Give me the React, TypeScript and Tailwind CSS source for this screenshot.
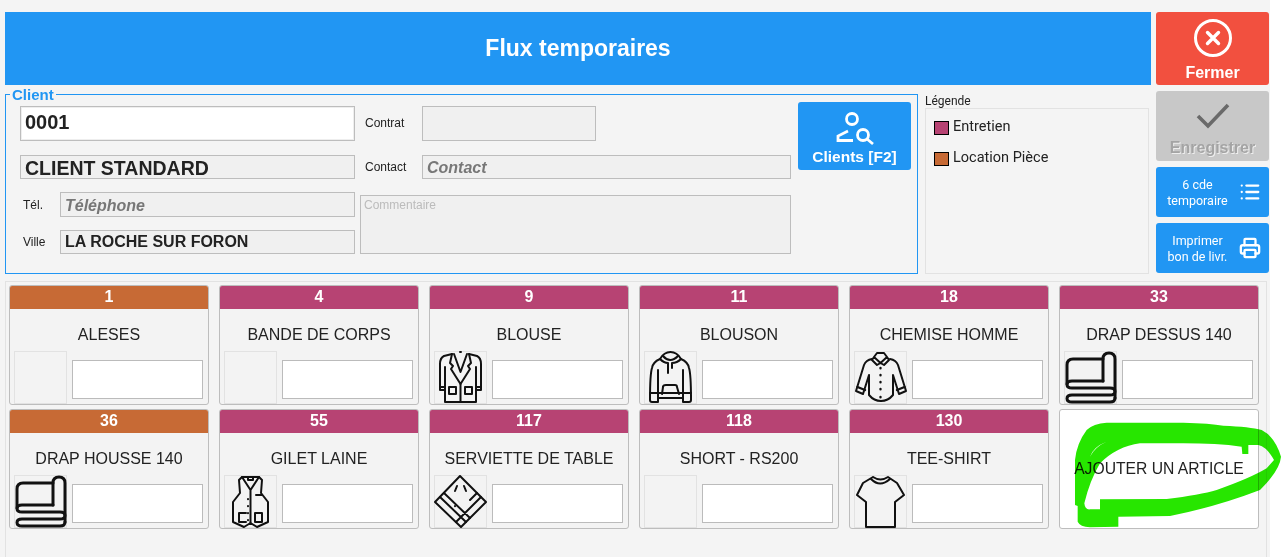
import { List, Printer } from "lucide-react";
import type { ReactNode } from "react";

const ENTRETIEN = "bg-[#b74373]";
const LOCATION = "bg-[#c76a35]";

// --- article icons, all drawn on the 53px thumbnail box ---
function Thumb({ children, weight = 2 }: { children?: ReactNode; weight?: number }) {
    return (
        <div className="w-[53px] h-[53px] shrink-0 border border-[#e2e2e2]">
            {children && (
                <svg
                    viewBox="0 0 53 53"
                    className="w-[53px] h-[53px] -m-px"
                    fill="none"
                    stroke="#111"
                    strokeWidth={weight}
                    strokeLinecap="round"
                    strokeLinejoin="round"
                >
                    {children}
                </svg>
            )}
        </div>
    );
}

const Blouse = () => (
    <Thumb>
        <path d="M18 3 L10 5 Q6 7 6 13 V39 H11 V51 H42 V39 H47 V13 Q47 7 43 5 L35 3" />
        <path d="M11 39 V16 M42 39 V16 M6 36 H11 M42 36 H47 M26.5 33 V51" />
        <path d="M18 3 L16 12 L19 15 L17 18 L26.5 33 L36 18 L34 15 L37 12 L35 3" />
        <path d="M20 3 L26.5 21 L33 3 M26 1 H27" />
        <rect x="15" y="36" width="7" height="7" />
        <rect x="31" y="36" width="7" height="7" />
    </Thumb>
);

const Hoodie = () => (
    <Thumb>
        <path d="M16 8 Q20 1 26.5 1 Q33 1 37 8 Q44 11 45 17 Q47 23 47 49 Q47 51 45 51 H39 V47 H14 V51 H8 Q6 51 6 49 Q6 23 8 17 Q9 11 16 8 Z" />
        <path d="M19 5 Q26 13 34 5 M16 8 Q20 12 24 12 M37 8 Q33 12 28 12 M24 12 V22 M28 12 V17" />
        <path d="M18 43 L19 36 Q19 34 22 34 H31 Q33 34 33 36 L35 43" />
        <path d="M14 47 V19 M39 47 V19 M6 42 H47" />
    </Thumb>
);

const Shirt = () => (
    <Thumb>
        <path d="M18 8 Q12 9 10 14 L2 40 L9 43 L15 24 V44 Q20 50 27 50 Q34 50 39 44 V24 L45 43 L52 40 L44 14 Q42 9 36 8" />
        <path d="M20 6 L26.5 12 L33 6 L30 2 H23 Z M20 6 L18 9 L23 14 L26.5 12 L30 14 L35 9 L33 6" />
        <path d="M3.5 36 L11 39 M50.5 36 L43 39 M26.5 17 V17.2 M26.5 24 V24.2 M26.5 31 V31.2 M26.5 38 V38.2 M26.5 46 V46.2" strokeWidth={2.4} />
    </Thumb>
);

const Roll = () => (
    <Thumb weight={3}>
        <path d="M39 8 H9 Q3 8 3 14 V33" />
        <path d="M39 30 V8 Q39 2 45 2 Q51 2 51 8 V47" />
        <path d="M39 30 H8 Q3 30 3 33.5 Q3 37 8 37 H46 Q51 37 51 40.5 Q51 44 46 44 H8 Q3 44 3 47.5 Q3 51 8 51 H46 Q51 51 51 47" />
    </Thumb>
);

const Vest = () => (
    <Thumb>
        <path d="M18 2 L15 5 L16 18 L9 27 V47 L20 52 L26.5 48 L33 52 L44 47 V27 L37 18 L38 5 L35 2 Z" />
        <path d="M18 2 L26.5 15 L35 2 M24 2 V5 H29 V2 M26.5 15 V48 M32 20 H38" />
        <path d="M22 38 H15 V47 H22" />
        <rect x="31" y="38" width="7" height="9" />
        <path d="M24 24 V24.2 M24 31 V31.2 M24 38 V38.2 M24 45 V45.2" />
    </Thumb>
);

const Napkin = () => (
    <Thumb>
        <path d="M26 1 L52 27 L27 52 L1 27 Z" />
        <path d="M6 22 L32 47 M10 18 L36 43 M47 22 L22 47 M43 18 L36 25" />
        <path d="M23 11 L21 16 M30 11 L32 16 M21 31 V31.2" />
    </Thumb>
);

const TeeShirt = () => (
    <Thumb>
        <path d="M19 2 L9 8 L3 20 L12 27 V52 H41 V27 L50 20 L43 8 L34 2 Q26.5 7 19 2" />
        <path d="M17 4 Q26 13 36 4" />
    </Thumb>
);

const EmptyThumb = () => <Thumb />;

type Article = { code: number; name: string; color: string; icon: () => ReactNode };

const articles: Article[] = [
    { code: 1, name: "ALESES", color: LOCATION, icon: EmptyThumb },
    { code: 4, name: "BANDE DE CORPS", color: ENTRETIEN, icon: EmptyThumb },
    { code: 9, name: "BLOUSE", color: ENTRETIEN, icon: Blouse },
    { code: 11, name: "BLOUSON", color: ENTRETIEN, icon: Hoodie },
    { code: 18, name: "CHEMISE HOMME", color: ENTRETIEN, icon: Shirt },
    { code: 33, name: "DRAP DESSUS 140", color: ENTRETIEN, icon: Roll },
    { code: 36, name: "DRAP HOUSSE 140", color: LOCATION, icon: Roll },
    { code: 55, name: "GILET LAINE", color: ENTRETIEN, icon: Vest },
    { code: 117, name: "SERVIETTE DE TABLE", color: ENTRETIEN, icon: Napkin },
    { code: 118, name: "SHORT - RS200", color: ENTRETIEN, icon: EmptyThumb },
    { code: 130, name: "TEE-SHIRT", color: ENTRETIEN, icon: TeeShirt },
];

function ArticleCard({ article }: { article: Article }) {
    const Icon = article.icon;
    return (
        <div className="h-[120px] border border-[#bdbdbd] rounded-[3px] bg-[#f3f3f3] flex flex-col overflow-hidden">
            <div className={`h-[23px] shrink-0 ${article.color} text-white font-bold text-[16px] leading-[22px] text-center`}>
                {article.code}
            </div>
            <div className="pt-[17px] text-[16px] leading-[18px] text-[#222] text-center">{article.name}</div>
            <div className="mt-auto flex items-end pl-[4px]">
                <Icon />
                <input className="ml-[5px] mb-[5px] w-[131px] h-[39px] bg-white border border-[#bbb] outline-none" />
            </div>
        </div>
    );
}

const boxClass = "border border-[#bdbdbd] bg-[#f0f0f0]";

export default function App() {
    return (
        <div className="w-[1270px] h-[557px] bg-[#f4f4f4] pt-[12px] overflow-visible font-['Liberation_Sans',Arial,sans-serif]">
            <div className="flex">
                {/* Left part: title, client and legend */}
                <div className="w-[1151px] pl-[5px] shrink-0">
                    <div className="h-[73px] bg-[#2196f3] text-white font-bold text-[23px] flex items-center justify-center">
                        Flux temporaires
                    </div>

                    <div className="flex mt-[9px]">
                        <div className="relative w-[913px] h-[180px] border border-[#2196f3] pt-[11px] pl-[14px] flex shrink-0">
                            <span className="absolute left-[4px] -top-[8px] px-[2px] bg-[#f4f4f4] text-[#2196f3] font-bold text-[15px] leading-[16px]">
                                Client
                            </span>

                            <div className="w-[771px] shrink-0 text-[12px] text-[#222]">
                                <div className="flex items-center h-[35px]">
                                    <input
                                        defaultValue="0001"
                                        className="w-[335px] h-[35px] bg-white border border-[#bdbdbd] shadow-[inset_0_0_0_1px_#eee] px-[4px] pb-[2px] text-[20px] font-bold text-[#222] outline-none"
                                    />
                                    <span className="ml-[10px] w-[57px] pb-[2px]">Contrat</span>
                                    <div className={`w-[174px] h-[35px] ${boxClass}`} />
                                </div>
                                <div className="flex items-center h-[24px] mt-[14px]">
                                    <div className={`w-[335px] h-[24px] ${boxClass} px-[4px] text-[19.5px] leading-[24px] font-bold text-[#222]`}>
                                        CLIENT STANDARD
                                    </div>
                                    <span className="ml-[10px] w-[57px]">Contact</span>
                                    <div className={`w-[369px] h-[24px] ${boxClass} px-[4px] text-[16px] leading-[23px] font-bold italic text-[#777]`}>
                                        Contact
                                    </div>
                                </div>
                                <div className="flex mt-[13px]">
                                    <div className="w-[335px]">
                                        <div className="flex items-center h-[25px]">
                                            <span className="w-[40px] pl-[3px]">Tél.</span>
                                            <div className={`w-[295px] h-[25px] ${boxClass} px-[4px] text-[16px] leading-[25px] font-bold italic text-[#777]`}>
                                                Téléphone
                                            </div>
                                        </div>
                                        <div className="flex items-center h-[24px] mt-[13px]">
                                            <span className="w-[40px] pl-[3px]">Ville</span>
                                            <div className={`w-[295px] h-[24px] ${boxClass} px-[4px] text-[16px] leading-[22px] font-bold text-[#222]`}>
                                                LA ROCHE SUR FORON
                                            </div>
                                        </div>
                                    </div>
                                    <div className={`ml-[5px] mt-[3px] w-[431px] h-[59px] ${boxClass} px-[3px] text-[#bbb]`}>
                                        Commentaire
                                    </div>
                                </div>
                            </div>

                            <button className="ml-[7px] -mt-[4px] w-[113px] h-[68px] rounded-[3px] bg-[#2196f3] text-white font-bold text-[15.5px] flex flex-col items-center">
                                <svg viewBox="0 0 40 40" className="w-[40px] h-[40px] mt-[8px]" fill="none" stroke="#fff" strokeWidth="2.8">
                                    <circle cx="17" cy="9" r="5.5" />
                                    <path d="M13 21 L3 26 V30.5 H18" />
                                    <circle cx="28" cy="25" r="5.5" />
                                    <path d="M32 29 L38 34" />
                                </svg>
                                <span className="leading-[16px] -mt-[1px]">Clients [F2]</span>
                            </button>
                        </div>

                        <div className="ml-[7px] w-[224px] h-[180px] flex flex-col font-['Roboto',sans-serif] text-[#222]">
                            <div className="text-[12px] leading-[14px]">Légende</div>
                            <div className="flex-1 border border-[#e2e2e2] pl-[8px] pt-[11px] text-[14.5px]">
                                <div className="flex items-center h-[15px]">
                                    <span className={`w-[15px] h-[14px] ${ENTRETIEN} border border-black`} />
                                    <span className="ml-[4px] pb-[2px]">Entretien</span>
                                </div>
                                <div className="flex items-center h-[15px] mt-[16px]">
                                    <span className={`w-[15px] h-[14px] ${LOCATION} border border-black`} />
                                    <span className="ml-[4px] pb-[2px]">Location Pièce</span>
                                </div>
                            </div>
                        </div>
                    </div>
                </div>

                {/* Right part: action buttons */}
                <div className="ml-[5px] w-[113px] flex flex-col gap-[6px] text-white">
                    <button className="h-[73px] rounded-[3px] bg-[#f2503f] flex flex-col items-center font-bold text-[16px]">
                        <svg viewBox="0 0 40 40" className="w-[40px] h-[40px] mt-[6px]" fill="none" stroke="#fff">
                            <circle cx="20" cy="20" r="17.5" strokeWidth="3" />
                            <path d="M14.5 14.5 L25.5 25.5 M25.5 14.5 L14.5 25.5" strokeWidth="3.4" strokeLinecap="round" />
                        </svg>
                        <span className="leading-[18px] mt-[6px]">Fermer</span>
                    </button>
                    <button className="h-[70px] rounded-[3px] bg-[#c8c8c8] flex flex-col items-center font-bold text-[16px] text-[#a4a4a4] [text-shadow:1px_1px_0_#eee]">
                        <svg viewBox="0 0 40 30" className="w-[40px] h-[30px] mt-[11px]" fill="none" stroke="#6a6a6a" strokeWidth="3.6">
                            <path d="M5 14 L15 24 L35 3" />
                        </svg>
                        <span className="leading-[18px] mt-[7px]">Enregistrer</span>
                    </button>
                    <button className="h-[50px] rounded-[3px] bg-[#2196f3] flex items-center font-['Roboto',sans-serif] text-[12.5px] leading-[16px]">
                        <span className="w-[83px] text-center pt-[2px]">6 cde<br />temporaire</span>
                        <List className="w-[22px] h-[22px]" strokeWidth={2.5} />
                    </button>
                    <button className="h-[50px] rounded-[3px] bg-[#2196f3] flex items-center font-['Roboto',sans-serif] text-[12.5px] leading-[16px]">
                        <span className="w-[83px] text-center pt-[2px]">Imprimer<br />bon de livr.</span>
                        <Printer className="w-[22px] h-[22px]" strokeWidth={2.5} />
                    </button>
                </div>
            </div>

            {/* Articles */}
            <div className="mt-[7px] ml-[5px] w-[1262px] h-[276px] border border-b-0 border-[#e2e2e2] pt-[3px] pl-[3px]">
                <div className="grid grid-cols-[repeat(6,200px)] gap-x-[10px] gap-y-[4px]">
                    {articles.map((a) => (
                        <ArticleCard key={a.code} article={a} />
                    ))}
                    <div className="relative h-[120px] border border-[#bdbdbd] rounded-[3px] bg-white flex items-center justify-center text-[15.7px] text-[#222]">
                        AJOUTER UN ARTICLE
                        {/* green marker scribble on top of the card */}
                        <svg
                            viewBox="0 0 1296 831"
                            className="absolute -left-[210px] -top-[130px] w-[432px] h-[277px] mix-blend-multiply pointer-events-none"
                        >
                            <path
                                fill="#27e600"
                                fillRule="evenodd"
                                d="M675 675 L675 540 Q680 490 710 450 Q730 430 770 428 L1000 428 Q1080 430 1120 437 Q1200 440 1235 450 Q1275 470 1293 530 Q1290 570 1230 630 Q1100 680 960 708 L805 710 L805 740 L720 742 Q690 740 683 725 L683 678 Z M703 670 Q705 690 720 688 L750 688 L750 658 L950 657 Q1050 645 1100 630 Q1200 595 1250 565 L1272 540 Q1250 500 1225 495 L1195 495 L1195 522 L1177 522 L1175 500 Q1100 490 1000 490 L870 490 Q800 500 750 550 Q720 600 703 670 Z M720 530 Q730 500 770 485 Q735 500 720 530 Z"
                            />
                        </svg>
                    </div>
                </div>
            </div>
        </div>
    );
}
